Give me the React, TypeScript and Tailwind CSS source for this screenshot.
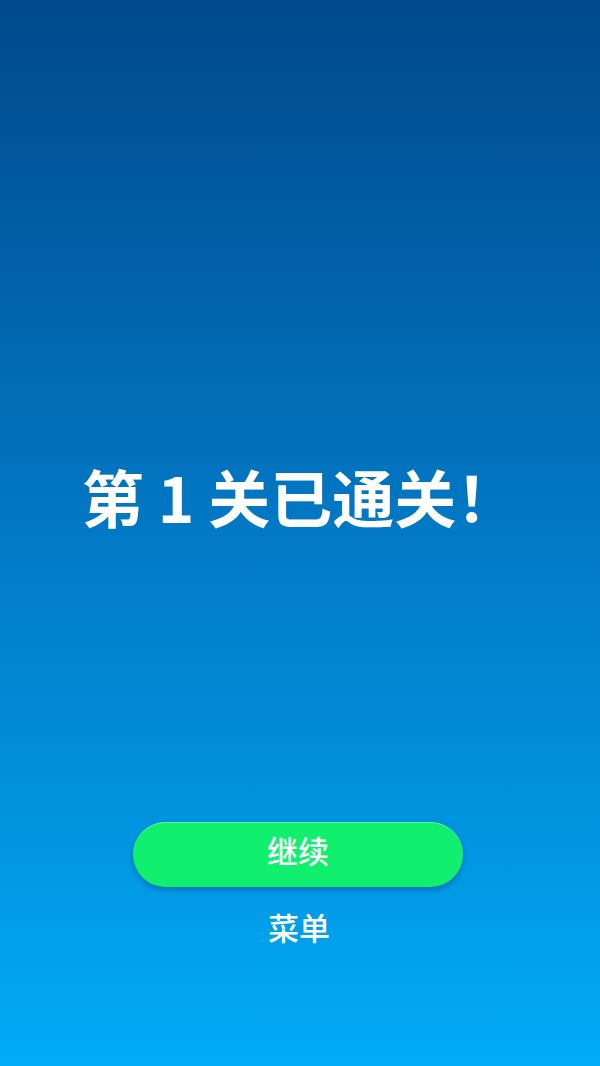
import React from 'react';

const cjk = { fontFamily: '"Noto Sans CJK SC", "Noto Sans", sans-serif' };

export default function App() {
  return (
    <div
      className="w-full h-[1066px] overflow-hidden bg-gradient-to-b from-[#01498c] via-[#0279c5] to-[#02abf6] flex flex-col items-center"
      style={cjk}
    >
      <h1 className="pt-[462px] text-[62px] leading-[68px] font-semibold text-white whitespace-nowrap">
        第 1 关已通关！
      </h1>

      <button className="mt-[292px] mr-[4px] w-[330px] h-[65px] pb-[12px] rounded-full bg-[#10ef6e] border-t border-[#5ff5a0] shadow-[0_3px_5px_rgba(0,40,90,0.35)] text-white text-[31px] leading-none font-medium">
        继续
      </button>

      <button className="mt-[20px] mr-[2px] h-[40px] text-white text-[31px] leading-[40px] font-medium">
        菜单
      </button>
    </div>
  );
}
